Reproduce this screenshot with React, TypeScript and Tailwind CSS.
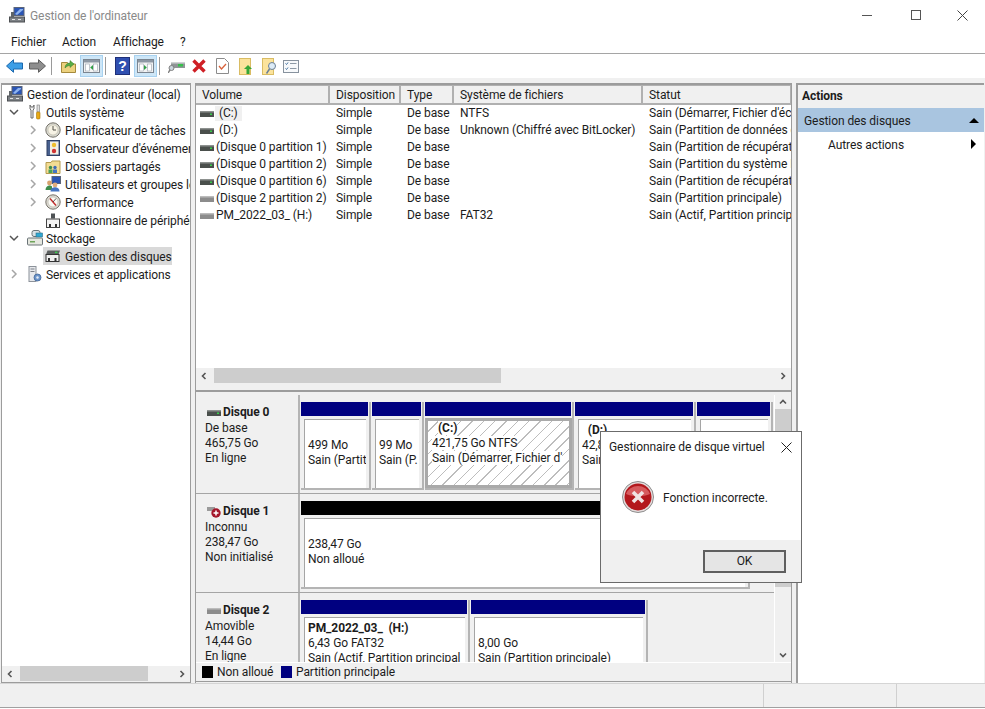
import type { ReactNode } from "react"

const tree = [
  { label: "Outils système", level: 1, open: true, icon: "tools" },
  { label: "Planificateur de tâches", level: 2, arrow: true, icon: "clock" },
  { label: "Observateur d'événements", level: 2, arrow: true, icon: "log" },
  { label: "Dossiers partagés", level: 2, arrow: true, icon: "share" },
  { label: "Utilisateurs et groupes locaux", level: 2, arrow: true, icon: "users" },
  { label: "Performance", level: 2, arrow: true, icon: "perf" },
  { label: "Gestionnaire de périphériques", level: 2, icon: "device" },
  { label: "Stockage", level: 1, open: true, icon: "storage" },
  { label: "Gestion des disques", level: 2, icon: "disk", selected: true },
  { label: "Services et applications", level: 1, arrow: true, icon: "services" },
]

const volumes = [
  ["(C:)", "Simple", "De base", "NTFS", "Sain (Démarrer, Fichier d'échange, Vidage)"],
  ["(D:)", "Simple", "De base", "Unknown (Chiffré avec BitLocker)", "Sain (Partition de données de base)"],
  ["(Disque 0 partition 1)", "Simple", "De base", "", "Sain (Partition de récupération)"],
  ["(Disque 0 partition 2)", "Simple", "De base", "", "Sain (Partition du système EFI)"],
  ["(Disque 0 partition 6)", "Simple", "De base", "", "Sain (Partition de récupération)"],
  ["(Disque 2 partition 2)", "Simple", "De base", "", "Sain (Partition principale)"],
  ["PM_2022_03_ (H:)", "Simple", "De base", "FAT32", "Sain (Actif, Partition principale)"],
]

const columns = [
  { name: "Volume", width: "w-[134px]" },
  { name: "Disposition", width: "w-[71px]" },
  { name: "Type", width: "w-[53px]" },
  { name: "Système de fichiers", width: "w-[189px]" },
  { name: "Statut", width: "w-[149px]" },
]

function Disk({ gray = false }: { gray?: boolean }) {
  return (
    <svg width="14" height="8" viewBox="0 0 14 8" className="shrink-0">
      <rect x="0" y="1" width="14" height="6" fill={gray ? "#8c8c8c" : "#4a4f4c"} />
      <rect x="0" y="1" width="14" height="1.5" fill={gray ? "#bcbcbc" : "#8d918f"} />
      {!gray && <rect x="10" y="3.5" width="2" height="1.5" fill="#37d04a" />}
    </svg>
  )
}

function Chevron({ open }: { open?: boolean }) {
  return (
    <svg width="10" height="10" viewBox="0 0 10 10" className="shrink-0">
      <path d={open ? "M1 3l4 4 4-4" : "M3 1l4 4-4 4"} fill="none" stroke={open ? "#555" : "#a6a6a6"} strokeWidth="1.5" />
    </svg>
  )
}

function Computer({ size = 16 }: { size?: number }) {
  return (
    <svg width={size} height={size} viewBox="0 0 16 16" className="shrink-0">
      <rect x="5" y="0.5" width="10" height="8" fill="#2a55b5" stroke="#5a6478" />
      <path d="M6 7l5-5h3v1L8 8z" fill="#8fb4ee" />
      <rect x="0.5" y="10" width="15" height="5" fill="#7d8185" stroke="#4c4f52" />
      <rect x="2" y="5" width="3" height="5" fill="#5f6468" />
      <rect x="3" y="12" width="3" height="1" fill="#e4e4e4" />
      <rect x="9" y="12" width="3" height="1" fill="#e4e4e4" />
    </svg>
  )
}

function TreeIcon({ name }: { name: string }) {
  if (name === "tools")
    return (
      <svg width="14" height="16" viewBox="0 0 14 16" className="shrink-0">
        <path d="M2 1v4l1 1v8h2V6l1-1V1L5 3H3z" fill="#f4f4f4" stroke="#6b6b6b" />
        <rect x="9" y="1" width="2.5" height="7" fill="#dfdfdf" stroke="#777" strokeWidth="0.6" />
        <rect x="8.5" y="8" width="3.5" height="7" rx="1" fill="#e8a913" stroke="#a47406" strokeWidth="0.6" />
      </svg>
    )
  if (name === "clock")
    return (
      <svg width="16" height="16" viewBox="0 0 16 16" className="shrink-0">
        <circle cx="8" cy="8" r="7.2" fill="#d8d8cf" stroke="#77736a" />
        <circle cx="8" cy="8" r="5" fill="#f7f3e5" stroke="#b5b0a0" strokeWidth="0.5" />
        <path d="M8 4v4h3" fill="none" stroke="#55524a" strokeWidth="1" />
      </svg>
    )
  if (name === "log")
    return (
      <svg width="16" height="16" viewBox="0 0 15 16" className="shrink-0">
        <rect x="1.5" y="0.5" width="12.5" height="15" fill="#48608f" stroke="#2e3f63" />
        <rect x="4.5" y="1.5" width="8.5" height="13" fill="#f1eee2" />
        <circle cx="8.5" cy="5" r="2.2" fill="#eebd2d" />
        <circle cx="8.5" cy="11" r="2.2" fill="#cf3232" />
      </svg>
    )
  if (name === "share")
    return (
      <svg width="16" height="15" viewBox="0 0 15 15" className="shrink-0">
        <path d="M0.5 3.5h5l1-1.5h8v12.5h-14z" fill="#f3dc93" stroke="#b59b4e" />
        <circle cx="5" cy="8.5" r="1.7" fill="#3f8d4d" />
        <circle cx="9.5" cy="8.5" r="1.7" fill="#3d6ab7" />
        <rect x="3" y="10.5" width="4" height="3.5" fill="#48a05a" />
        <rect x="7.5" y="10.5" width="4" height="3.5" fill="#4474c2" />
      </svg>
    )
  if (name === "users")
    return (
      <svg width="16" height="16" viewBox="0 0 16 16" className="shrink-0">
        <rect x="7" y="0.5" width="8.5" height="7" fill="#2a55b5" stroke="#5a6478" />
        <circle cx="4.5" cy="7" r="2.4" fill="#d8a26f" />
        <circle cx="10" cy="9" r="2.4" fill="#e0ad7d" />
        <path d="M0.5 14c0-3 2-4.5 4-4.5 1 0 2 .4 2.5 1V14z" fill="#3f8d4d" />
        <path d="M5.5 15.5c0-3 2-4.2 4.5-4.2s4.5 1.2 4.5 4.2z" fill="#4474c2" />
      </svg>
    )
  if (name === "perf")
    return (
      <svg width="16" height="16" viewBox="0 0 16 16" className="shrink-0">
        <circle cx="8" cy="8" r="7.2" fill="#dcdad2" stroke="#77736a" />
        <circle cx="8" cy="8" r="5" fill="#fbfaf4" stroke="#a9a69a" strokeWidth="0.5" />
        <path d="M5 4.5l6 7" stroke="#c22b2b" strokeWidth="1.4" />
        <path d="M11 4.5L8 8" stroke="#333" strokeWidth="0.8" />
      </svg>
    )
  if (name === "device")
    return (
      <svg width="16" height="15" viewBox="0 0 16 15" className="shrink-0">
        <rect x="6" y="0.5" width="4" height="5" fill="#4e5255" />
        <rect x="1.500" y="6" width="13" height="8.5" fill="#f3f3f3" stroke="#444" />
        <rect x="4" y="11" width="2" height="3" fill="#333" />
        <rect x="10" y="11" width="2" height="3" fill="#333" />
      </svg>
    )
  if (name === "storage")
    return (
      <svg width="16" height="16" viewBox="0 0 16 16" className="shrink-0">
        <rect x="5" y="0.5" width="8" height="6" rx="2" fill="#d9e2e6" stroke="#6a7377" />
        <rect x="9" y="3" width="6.5" height="4" fill="#2fa7d1" stroke="#2b6f8a" strokeWidth="0.6" />
        <rect x="0.5" y="8" width="15" height="7" rx="1" fill="#e5e7df" stroke="#6a7377" />
        <rect x="3" y="11" width="5" height="1.5" fill="#6fa45a" />
      </svg>
    )
  if (name === "disk")
    return (
      <svg width="16" height="12" viewBox="0 0 15 12" className="shrink-0">
        <path d="M2 0.5h12.5L13 4.5H0.5z" fill="#5b5f5f" />
        <rect x="9.5" y="1.7" width="2.5" height="1.4" fill="#3ad04e" />
        <rect x="0.5" y="4.5" width="13" height="7" fill="#efefef" stroke="#333" />
        <rect x="2.5" y="8" width="2" height="3.5" fill="#333" />
        <rect x="9" y="8" width="2" height="3.5" fill="#333" />
      </svg>
    )
  return (
    <svg width="16" height="16" viewBox="0 0 14 16" className="shrink-0">
      <rect x="1" y="0.5" width="7" height="15" fill="#e7e9ec" stroke="#8c929a" />
      <rect x="2.5" y="2.5" width="4" height="1" fill="#7b8088" />
      <rect x="2.5" y="5" width="4" height="1" fill="#7b8088" />
      <circle cx="9.5" cy="11.5" r="3.5" fill="#6c94c9" stroke="#3e6397" strokeWidth="0.8" />
      <circle cx="9.5" cy="11.5" r="1.2" fill="#e7eef8" />
    </svg>
  )
}

function TreeRow({ item }: { item: (typeof tree)[number] }) {
  const level2 = item.level === 2
  return (
    <div className={`flex h-[18px] items-center whitespace-nowrap ${level2 ? "pl-[26px]" : "pl-[7px]"}`}>
      <div className="flex w-[10px] shrink-0 justify-center">
        {(item.arrow || item.open) && <Chevron open={item.open} />}
      </div>
      <div className={`ml-[5px] flex h-[18px] items-center ${level2 ? "gap-[4px] pl-[2px]" : "gap-[3px] pl-[3px]"} ${item.selected ? "w-[129px] bg-[#d9d9d9]" : ""}`}>
        <div className="flex w-[16px] shrink-0 justify-center">
          <TreeIcon name={item.icon} />
        </div>
        <span className="pt-[2px]">{item.label}</span>
      </div>
    </div>
  )
}

function ToolButton({ children, active = false }: { children: ReactNode; active?: boolean }) {
  return (
    <div className={`flex h-[22px] w-[23px] items-center justify-center ${active ? "border border-[#a8d2f0] bg-[#cde6f7]" : ""}`}>
      {children}
    </div>
  )
}

function ToolSep() {
  return <div className="mx-[2px] h-[18px] w-px bg-[#9a9a9a]" />
}

function PaneBox({ side }: { side: "left" | "right" }) {
  return (
    <svg width="17" height="14" viewBox="0 0 17 14">
      <rect x="0.5" y="0.5" width="16" height="13" fill="#f3f3f3" stroke="#7b8590" />
      <rect x="1" y="1" width="15" height="2.5" fill="#8d98a4" />
      <rect x="2.5" y="5" width="4" height="7" fill="#fff" stroke="#9aa4ae" strokeWidth="0.6" />
      <rect x="10.5" y="5" width="4" height="7" fill="#fff" stroke="#9aa4ae" strokeWidth="0.6" />
      <path d={side === "left" ? "M10 6v5L7.2 8.5z" : "M7 6v5l2.8-2.5z"} fill="#2f9e44" />
    </svg>
  )
}

function Toolbar() {
  return (
    <div className="flex h-[24px] shrink-0 items-center bg-white pl-[6px]">
      <svg width="17" height="14" viewBox="0 0 17 14">
        <path d="M0.5 7L7.5 0.7V4h9v6h-9v3.3z" fill="#3c9ee6" stroke="#1c68ad" />
      </svg>
      <svg width="17" height="14" viewBox="0 0 17 14" className="ml-[6px]">
        <path d="M16.5 7L9.5 0.7V4h-9v6h9v3.3z" fill="#8e8e8e" stroke="#5d5d5d" />
      </svg>
      <div className="ml-[3px]"><ToolSep /></div>
      <svg width="15" height="14" viewBox="0 0 15 14" className="ml-[7px]">
        <path d="M0.5 3.5h6l1 1.5h7v8.5h-14z" fill="#ecd17e" stroke="#a58a3c" />
        <path d="M4 9c0-3 2-5 5-5V1.5L13 5 9 8.5V6.5C7 6.5 5.500 7.500 4 9z" fill="#58ad45" stroke="#397a2b" strokeWidth="0.5" />
      </svg>
      <div className="ml-[4px]"><ToolButton active><PaneBox side="left" /></ToolButton></div>
      <ToolSep />
      <svg width="15" height="18" viewBox="0 0 15 18" className="ml-[7px]">
        <rect x="0.5" y="0.5" width="14" height="17" fill="#2f4fb0" stroke="#1e2f78" />
        <text x="7.5" y="14" textAnchor="middle" fontSize="14" fontWeight="700" fill="#fff" fontFamily="Liberation Sans, sans-serif">?</text>
      </svg>
      <div className="ml-[4px]"><ToolButton active><PaneBox side="right" /></ToolButton></div>
      <ToolSep />
      <svg width="17" height="14" viewBox="0 0 17 14" className="ml-[6px]">
        <rect x="3" y="3" width="14" height="6" fill="#8f9596" />
        <rect x="3" y="3" width="14" height="1.500" fill="#cfd3d3" />
        <rect x="10" y="5" width="5" height="2.500" fill="#35c04a" />
        <circle cx="3.500" cy="9" r="2.500" fill="#c9d4dc" stroke="#808080" />
        <path d="M2 11l-2 3" stroke="#808080" strokeWidth="1.500" />
      </svg>
      <svg width="14" height="14" viewBox="0 0 14 14" className="ml-[7px]">
        <path d="M1.500 1.500l11 11M12.500 1.500l-11 11" stroke="#cf1f25" strokeWidth="3.400" />
      </svg>
      <svg width="13" height="16" viewBox="0 0 13 16" className="ml-[10px]">
        <path d="M0.500 0.500h8l4 4v11h-12z" fill="#fff" stroke="#8c8c8c" />
        <path d="M3 8l2.500 3L10 6" fill="none" stroke="#d9633c" strokeWidth="1.300" />
      </svg>
      <svg width="14" height="17" viewBox="0 0 14 17" className="ml-[10px]">
        <rect x="0.500" y="0.500" width="11" height="16" fill="#fbe39c" stroke="#d9bc63" />
        <path d="M9 7l4 4h-2.500v5h-3v-5H5z" fill="#35a637" />
      </svg>
      <svg width="15" height="17" viewBox="0 0 15 17" className="ml-[9px]">
        <rect x="0.500" y="0.500" width="11" height="16" fill="#fbe39c" stroke="#d9bc63" />
        <circle cx="10" cy="8" r="3.500" fill="#dcebf7" stroke="#6a7f96" />
        <path d="M7.500 11l-3 4.500" stroke="#6a7f96" strokeWidth="1.500" />
      </svg>
      <svg width="16" height="13" viewBox="0 0 16 13" className="ml-[6px]">
        <rect x="0.500" y="0.500" width="15" height="12" fill="#f7f9fb" stroke="#87929e" />
        <path d="M2.500 3.500l1 1 1.500-2M2.500 8.500l1 1 1.500-2" fill="none" stroke="#3f6f9f" />
        <path d="M7 3.500h6.500M7 8.500h6.500" stroke="#8d99a5" />
      </svg>
    </div>
  )
}

function HScroll({ left, width }: { left: string; width: string }) {
  return (
    <div className="flex h-[15px] shrink-0 items-center bg-[#f0f0f0]">
      <div className={`flex ${left} shrink-0 items-center`}>
        <svg width="8" height="8" viewBox="0 0 8 8" className="ml-[4px]">
          <path d="M5.500 1L2.500 4l3 3" fill="none" stroke="#555" strokeWidth="1.600" />
        </svg>
      </div>
      <div className={`h-[15px] ${width} bg-[#cdcdcd]`} />
      <svg width="8" height="8" viewBox="0 0 8 8" className="ml-auto mr-[4px]">
        <path d="M2.500 1l3 3-3 3" fill="none" stroke="#555" strokeWidth="1.600" />
      </svg>
    </div>
  )
}

type PartitionProps = {
  width: string
  bar?: string
  title?: string
  size?: string
  status?: string
  selected?: boolean
}

function Partition({ width, bar = "bg-[#000080]", title, size, status, selected }: PartitionProps) {
  return (
    <div className={`flex h-[88px] shrink-0 flex-col overflow-hidden border-r-2 border-b-2 border-[#b4b4b4] ${width}`}>
      <div className={`mr-px h-[14px] shrink-0 ${bar}`} />
      {selected ? (
        <div className="mt-[2px] h-[71px] border-[3px] border-[#a9a9a9] bg-[repeating-linear-gradient(135deg,#ffffff,#ffffff_7px,#bdbdbd_7px,#bdbdbd_8px)] pl-[4px] text-left">
          <div className="h-[15px] pl-[6px] font-bold"><span className="bg-white">{title}</span></div>
          <div className="h-[15px]"><span className="bg-white">{size}</span></div>
          <div className="h-[15px] overflow-hidden whitespace-nowrap"><span className="bg-white">{status}</span></div>
        </div>
      ) : (
        <div className="mx-[3px] mt-[3px] h-[70px] overflow-hidden border-t border-l border-[#a5a5a5] bg-white pl-[3px] pt-[3px] whitespace-nowrap">
          <div className="h-[15px] font-bold whitespace-pre">{title}</div>
          <div className="h-[15px]">{size}</div>
          <div className="h-[15px]">{status}</div>
        </div>
      )}
    </div>
  )
}

function DiskRow({ name, kind, size, state, icon, children }: { name: string; kind: string; size: string; state: string; icon: ReactNode; children: ReactNode }) {
  return (
    <div className="flex h-[99px] shrink-0 border-b border-[#a5a5a5]">
      <div className="w-[104px] shrink-0 border-r-2 border-[#b4b4b4] pl-[9px] pt-[9px]">
        <div className="flex h-[17px] items-center font-bold">
          <div className="flex w-[16px] shrink-0 pl-[2px]">{icon}</div>
          <span className="ml-[2px]">{name}</span>
        </div>
        <div className="h-[15px] leading-[15px]">{kind}</div>
        <div className="h-[15px] leading-[15px]">{size}</div>
        <div className="h-[15px] leading-[15px]">{state}</div>
      </div>
      <div className="flex min-w-0 flex-1 gap-px pl-px pt-[7px]">{children}</div>
    </div>
  )
}

function VolumeTable() {
  return (
    <div className="flex min-h-0 flex-1 flex-col bg-white">
      <div className="flex h-[20px] shrink-0 overflow-hidden">
        {columns.map((c) => (
          <div key={c.name} className={`flex shrink-0 items-center border-t border-r-2 border-b-2 border-[#b0b0b0] bg-[#f0f0f0] pl-[6px] pt-[2px] ${c.width}`}>
            {c.name}
          </div>
        ))}
      </div>
      <div className="min-h-0 flex-1 overflow-hidden">
        {volumes.map((row, i) => (
          <div key={row[0]} className="flex h-[17px] items-center whitespace-nowrap">
            <div className="flex w-[134px] shrink-0 items-center pl-[4px]">
              <Disk gray={i > 4} />
              <span className={i === 0 ? "ml-px bg-[#f0f0f0] px-[4px]" : i === 1 ? "ml-[5px]" : "ml-[2px]"}>{row[0]}</span>
            </div>
            <div className="w-[71px] shrink-0 pl-[6px]">{row[1]}</div>
            <div className="w-[53px] shrink-0 pl-[6px]">{row[2]}</div>
            <div className="w-[189px] shrink-0 pl-[6px]">{row[3]}</div>
            <div className="w-[149px] shrink-0 overflow-hidden pl-[6px]">{row[4]}</div>
          </div>
        ))}
      </div>
      <HScroll left="w-[18px]" width="w-[287px]" />
    </div>
  )
}

function DiskPanel() {
  return (
    <div className="flex h-[286px] shrink-0 flex-col bg-[#f0f0f0]">
      <div className="flex min-h-0 flex-1">
        <div className="min-w-0 flex-1 overflow-hidden">
          <DiskRow name="Disque 0" kind="De base" size="465,75 Go" state="En ligne" icon={<Disk />}>
            <Partition width="w-[70px]" size="499 Mo" status="Sain (Partit" />
            <Partition width="w-[52px]" size="99 Mo" status="Sain (P." />
            <Partition width="w-[149px]" selected title="(C:)" size="421,75 Go NTFS" status="Sain (Démarrer, Fichier d'" />
            <Partition width="w-[121px]" title="  (D:)" size="42,89 Go" status="Sain (Partition" />
            <Partition width="w-[76px]" />
          </DiskRow>
          <DiskRow
            name="Disque 1"
            kind="Inconnu"
            size="238,47 Go"
            state="Non initialisé"
            icon={
              <svg width="15" height="12" viewBox="0 0 15 12" className="shrink-0">
                <rect x="0" y="1" width="8" height="4" fill="#9a9a9a" />
                <circle cx="9" cy="7" r="4.700" fill="#a3162a" />
                <path d="M6.500 7h5M9 4.500v5" stroke="#fff" strokeWidth="1.500" />
              </svg>
            }
          >
            <Partition width="w-[449px]" bar="bg-black" size="238,47 Go" status="Non alloué" />
          </DiskRow>
          <DiskRow name="Disque 2" kind="Amovible" size="14,44 Go" state="En ligne" icon={<Disk gray />}>
            <Partition width="w-[169px]" title="PM_2022_03_  (H:)" size="6,43 Go FAT32" status="Sain (Actif, Partition principal" />
            <Partition width="w-[177px]" size="8,00 Go" status="Sain (Partition principale)" />
          </DiskRow>
        </div>
        <div className="flex w-[17px] shrink-0 flex-col items-center border-l border-white bg-[#f0f0f0]">
          <div className="flex h-[14px] shrink-0 items-center">
            <svg width="8" height="8" viewBox="0 0 8 8">
              <path d="M1 5.500l3-3 3 3" fill="none" stroke="#555" strokeWidth="1.600" />
            </svg>
          </div>
          <div className="h-[178px] w-full bg-[#cdcdcd]" />
          <div className="mt-auto flex h-[14px] shrink-0 items-center">
            <svg width="8" height="8" viewBox="0 0 8 8">
              <path d="M1 2.500l3 3 3-3" fill="none" stroke="#555" strokeWidth="1.600" />
            </svg>
          </div>
        </div>
      </div>
      <div className="flex h-[19px] shrink-0 items-center border-t border-white pl-[6px]">
        <div className="h-[12px] w-[11px] bg-black" />
        <span className="ml-[4px] w-[64px] whitespace-nowrap">Non alloué</span>
        <div className="h-[12px] w-[11px] bg-[#000080]" />
        <span className="ml-[4px] whitespace-nowrap">Partition principale</span>
      </div>
    </div>
  )
}

function ErrorDialog() {
  return (
    <div className="absolute top-[431px] left-[600px] flex h-[152px] w-[202px] flex-col border border-[#6b6b6b] bg-white">
      <div className="flex h-[30px] shrink-0 items-center justify-between pl-[8px] pr-[9px]">
        <span className="whitespace-nowrap">Gestionnaire de disque virtuel</span>
        <svg width="11" height="11" viewBox="0 0 11 11">
          <path d="M0.500 0.500l10 10M10.500 0.500l-10 10" stroke="#222" />
        </svg>
      </div>
      <div className="flex flex-1 items-center gap-[9px] pb-[8px] pl-[21px]">
        <svg width="32" height="32" viewBox="0 0 32 32">
          <circle cx="16" cy="16" r="15.500" fill="#e4dcdc" stroke="#8d8d8d" />
          <circle cx="16" cy="16" r="13.500" fill="#b3181d" />
          <path d="M4 13a12.500 11 0 0 1 24 0c-7 3-17 3-24 0z" fill="#d65b5e" />
          <path d="M11 11l10 10M21 11l-10 10" stroke="#f0e4e4" strokeWidth="3.600" />
        </svg>
        <span className="pt-[2px]">Fonction incorrecte.</span>
      </div>
      <div className="flex h-[42px] shrink-0 items-center justify-end bg-[#f0f0f0] pr-[15px] pt-px">
        <div className="flex h-[23px] w-[83px] items-center justify-center border-2 border-[#5f5f5f] bg-[#e5e5e5]">OK</div>
      </div>
    </div>
  )
}

export default function App() {
  return (
    <div className="relative flex h-[709px] w-[985px] flex-col overflow-hidden bg-[#f0f0f0] font-['Roboto',sans-serif] text-[12px] leading-[15px] tracking-[-0.08px] text-[#1c1c1c]">
      <div className="flex h-[30px] shrink-0 items-center bg-white pl-[9px]">
        <Computer />
        <span className="ml-[5px] pt-[2px] text-[#8a8a8a]">Gestion de l'ordinateur</span>
        <div className="ml-auto flex items-center pr-[17px]">
          <div className="h-px w-[10px] bg-[#555]" />
          <div className="ml-[39px] h-[10px] w-[10px] border border-[#555]" />
          <svg width="11" height="11" viewBox="0 0 11 11" className="ml-[36px]">
            <path d="M0.500 0.500l10 10M10.500 0.500l-10 10" stroke="#444" />
          </svg>
        </div>
      </div>
      <div className="flex h-[24px] shrink-0 items-center border-b border-[#a5a5a5] bg-white pl-[11px] pt-[2px]">
        <span className="w-[51px]">Fichier</span>
        <span className="w-[51px]">Action</span>
        <span className="w-[67px]">Affichage</span>
        <span>?</span>
      </div>
      <Toolbar />
      <div className="flex min-h-0 flex-1 gap-[4px] pt-[5px] pl-px pr-px">
        <div className="flex w-[190px] shrink-0 flex-col border border-t-2 border-[#9c9c9c] bg-white">
          <div className="min-h-0 flex-1 overflow-hidden">
            <div className="flex h-[18px] items-center gap-[4px] whitespace-nowrap pl-[5px]">
              <Computer />
              <span className="pt-[2px]">Gestion de l'ordinateur (local)</span>
            </div>
            {tree.map((item) => (
              <TreeRow key={item.label} item={item} />
            ))}
          </div>
          <HScroll left="w-[18px]" width="w-[128px]" />
          <div className="h-px shrink-0 bg-[#f0f0f0]" />
        </div>
        <div className="flex w-[597px] shrink-0 flex-col border border-t-2 border-b-0 border-[#9c9c9c] bg-[#f0f0f0]">
          <VolumeTable />
          <div className="h-[9px] shrink-0 border-b-2 border-[#9c9c9c]" />
          <div className="h-[3px] shrink-0" />
          <DiskPanel />
          <div className="h-[2px] shrink-0 border-t border-[#9c9c9c]" />
        </div>
        <div className="flex flex-1 flex-col border-2 border-r-0 border-b-0 border-[#9c9c9c] bg-white">
          <div className="flex h-[23px] shrink-0 items-center bg-[#f0f0f0] pl-[4px] font-bold">Actions</div>
          <div className="flex h-[24px] shrink-0 items-center justify-between bg-[#a9c5e0] pl-[6px] pr-[5px]">
            <span className="pt-[2px]">Gestion des disques</span>
            <div className="h-0 w-0 border-x-[5px] border-b-[5px] border-x-transparent border-b-black" />
          </div>
          <div className="flex h-[24px] shrink-0 items-center justify-between pl-[30px] pr-[8px]">
            <span className="pt-[2px]">Autres actions</span>
            <div className="h-0 w-0 border-y-[5px] border-l-[5px] border-y-transparent border-l-black" />
          </div>
        </div>
      </div>
      <div className="flex h-[25px] shrink-0 border-t border-b border-t-[#d5d5d5] border-b-[#a0a0a0]">
        <div className="w-[764px] border-r border-[#d0d0d0]" />
        <div className="w-[133px] border-r border-[#d0d0d0]" />
      </div>
      <div className="h-px shrink-0 bg-white" />
      <ErrorDialog />
    </div>
  )
}
